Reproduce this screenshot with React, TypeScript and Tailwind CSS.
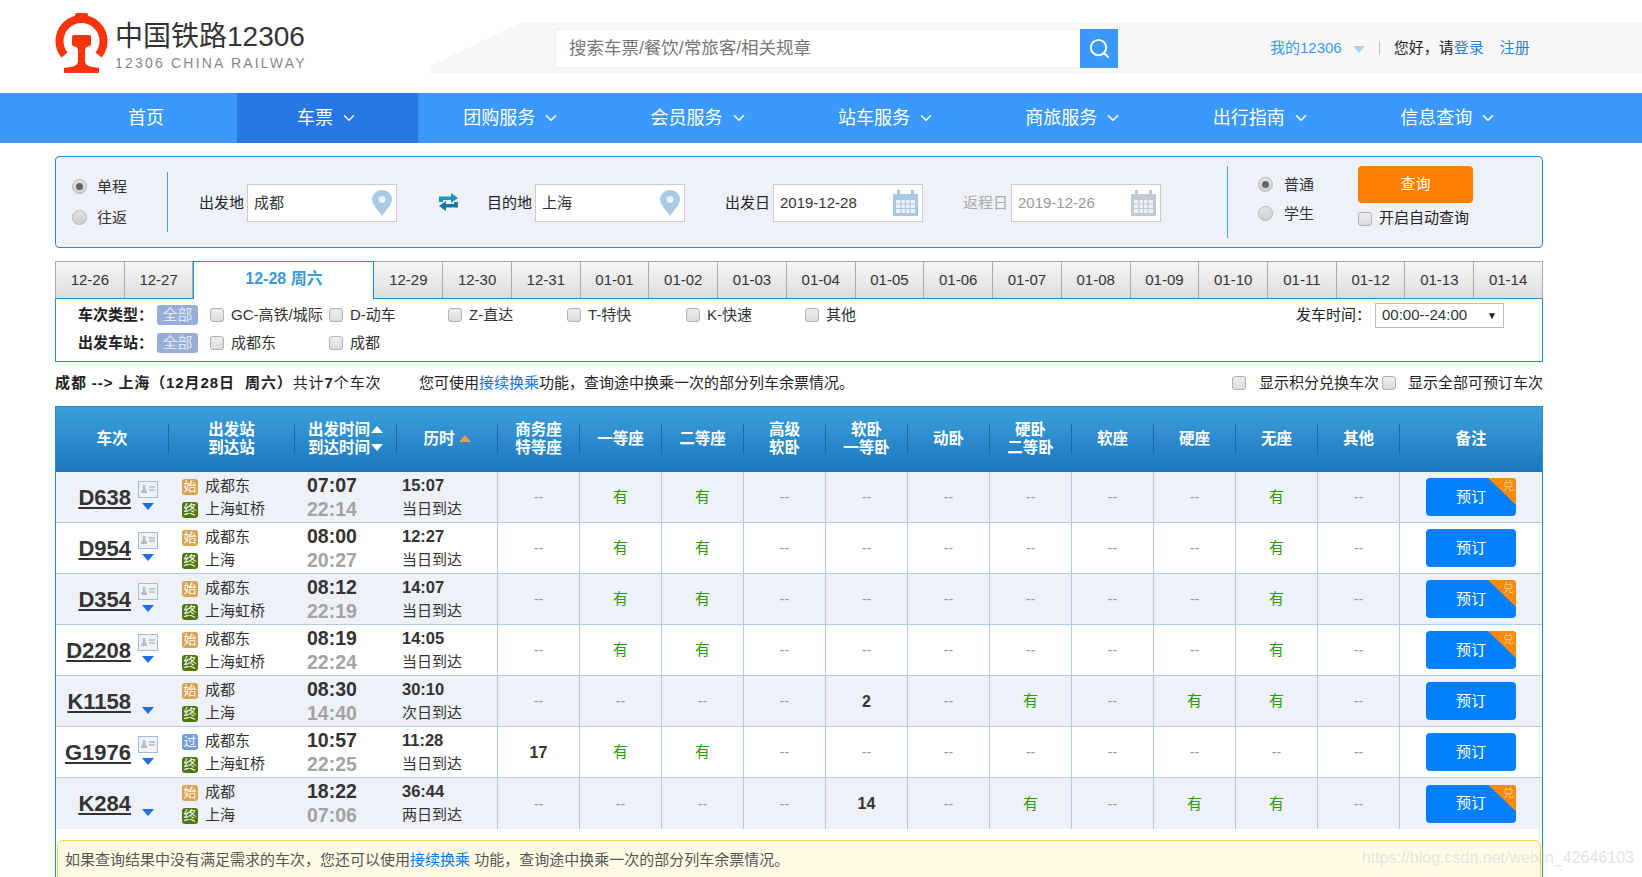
import { ChevronDown, Search } from 'lucide-react';

const navItems = ['团购服务', '会员服务', '站车服务', '商旅服务', '出行指南', '信息查询'];
const dates = ['12-29', '12-30', '12-31', '01-01', '01-02', '01-03', '01-04', '01-05', '01-06', '01-07', '01-08', '01-09', '01-10', '01-11', '01-12', '01-13', '01-14'];
const seatHeads = [['商务座', '特等座'], ['一等座'], ['二等座'], ['高级', '软卧'], ['软卧', '一等卧'], ['动卧'], ['硬卧', '二等卧'], ['软座'], ['硬座'], ['无座'], ['其他']];
const typeFilters = ['GC-高铁/城际', 'D-动车', 'Z-直达', 'T-特快', 'K-快速', '其他'];

const Y = '有';
const N = '--';
const trains = [
  { no: 'D638', id: true, mark: '始', from: '成都东', to: '上海虹桥', dep: '07:07', arr: '22:14', dur: '15:07', day: '当日到达', seats: [N, Y, Y, N, N, N, N, N, N, Y, N], ex: true },
  { no: 'D954', id: true, mark: '始', from: '成都东', to: '上海', dep: '08:00', arr: '20:27', dur: '12:27', day: '当日到达', seats: [N, Y, Y, N, N, N, N, N, N, Y, N], ex: false },
  { no: 'D354', id: true, mark: '始', from: '成都东', to: '上海虹桥', dep: '08:12', arr: '22:19', dur: '14:07', day: '当日到达', seats: [N, Y, Y, N, N, N, N, N, N, Y, N], ex: true },
  { no: 'D2208', id: true, mark: '始', from: '成都东', to: '上海虹桥', dep: '08:19', arr: '22:24', dur: '14:05', day: '当日到达', seats: [N, Y, Y, N, N, N, N, N, N, Y, N], ex: true },
  { no: 'K1158', id: false, mark: '始', from: '成都', to: '上海', dep: '08:30', arr: '14:40', dur: '30:10', day: '次日到达', seats: [N, N, N, N, '2', N, Y, N, Y, Y, N], ex: false },
  { no: 'G1976', id: true, mark: '过', from: '成都东', to: '上海虹桥', dep: '10:57', arr: '22:25', dur: '11:28', day: '当日到达', seats: ['17', Y, Y, N, N, N, N, N, N, N, N], ex: false },
  { no: 'K284', id: false, mark: '始', from: '成都', to: '上海', dep: '18:22', arr: '07:06', dur: '36:44', day: '两日到达', seats: [N, N, N, N, '14', N, Y, N, Y, Y, N], ex: true },
];

function Logo() {
  return (
    <svg width="53" height="60" viewBox="0 0 53 60" className="shrink-0">
      <path d="M9.5 42 A22 22 0 1 1 43.5 42" fill="none" stroke="#f9330c" strokeWidth="8" />
      <path d="M20 6 V2 Q20 0 22 0 H31 Q33 0 33 2 V6 Z" fill="#f9330c" />
      <path d="M17 24 Q17 22 19 22 H34 Q36 22 36 24 V31 Q36 33 33 33.5 Q30 34 30 38 V48 Q30 52 35 53.5 L44 55 V60 H9 V55 L18 53.5 Q23 52 23 48 V38 Q23 34 20 33.5 Q17 33 17 31 Z" fill="#f9330c" />
    </svg>
  );
}

function Radio({ on }: { on?: boolean }) {
  return (
    <span className="flex h-[15px] w-[15px] items-center justify-center rounded-full border border-[#b5b5b5] bg-gradient-to-b from-[#e4e4e4] to-[#cfcfcf]">
      {on && <span className="h-[7px] w-[7px] rounded-full bg-[#666]" />}
    </span>
  );
}

function Check() {
  return <span className="block h-[14px] w-[14px] shrink-0 rounded-[3px] border border-[#b0b0b0] bg-gradient-to-b from-[#eeeeee] to-[#dcdcdc]" />;
}

function Pin() {
  return (
    <svg width="20" height="26" viewBox="0 0 20 26">
      <path d="M10 26 C6 20 0 15 0 9.5 A10 9.5 0 0 1 20 9.5 C20 15 14 20 10 26 Z" fill="#a7cbe6" />
      <circle cx="10" cy="9.5" r="3.5" fill="#eef1f8" />
    </svg>
  );
}

function Calendar({ off }: { off?: boolean }) {
  const c = off ? '#c3c8d5' : '#a9c8e3';
  return (
    <svg width="25" height="26" viewBox="0 0 25 26">
      <path d="M0 4 H4 V0 H7 V4 H18 V0 H21 V4 H25 V26 H0 Z" fill={c} />
      <rect x="3" y="10" width="19" height="13" fill="#eef1f8" />
      <path d="M3 14 H22 M3 18.5 H22 M8 10 V23 M12.5 10 V23 M17 10 V23" stroke={c} strokeWidth="1.2" />
    </svg>
  );
}

function Swap() {
  return (
    <svg width="21" height="18" viewBox="0 0 21 18">
      <path d="M1 9 V3.5 H13 V0 L20 5 L13 10 V7 H5 V9 Z" fill="#1b95c4" />
      <path d="M20 9 V14.5 H8 V18 L1 13 L8 8 V11 H16 V9 Z" fill="#14789f" />
    </svg>
  );
}

function Triangle({ up, className }: { up?: boolean; className: string }) {
  return (
    <svg width="12" height="7" viewBox="0 0 12 7" className={className}>
      <polygon points={up ? '6,0 12,7 0,7' : '0,0 12,0 6,7'} fill="currentColor" />
    </svg>
  );
}

function IdCard() {
  return (
    <svg width="20" height="17" viewBox="0 0 20 17" className="block">
      <rect x="0.5" y="0.5" width="19" height="16" fill="#eef3fa" stroke="#9fbcdf" />
      <path d="M3 12 H9 V10 L7.3 8.5 V4 H4.8 V8.5 L3 10 Z" fill="#b9b9c0" />
      <path d="M11 6 H17 M11 9 H17" stroke="#b9b9c0" strokeWidth="1.4" />
    </svg>
  );
}

function Field({ label, value, off, children }: { label: string; value: string; off?: boolean; children: React.ReactNode }) {
  return (
    <div className="mt-[2px] flex items-center">
      <span className={`w-[46px] text-[15px] ${off ? 'text-[#aaa]' : 'text-[#222]'}`}>{label}</span>
      <div className="ml-[2px] flex h-[38px] w-[150px] items-center justify-between border border-[#ccc] bg-white pl-[6px] pr-[4px]">
        <span className={`text-[15px] ${off ? 'text-[#999]' : 'text-[#333]'}`}>{value}</span>
        {children}
      </div>
    </div>
  );
}

function Station({ mark, name }: { mark: string; name: string }) {
  const bg = mark === '始' ? 'bg-[#d9a24f]' : mark === '终' ? 'bg-[#4f7710]' : 'bg-[#6f9ce2]';
  return (
    <div className="flex h-[23px] items-center gap-[7px]">
      <span className={`flex h-[16px] w-[16px] items-center justify-center rounded-[3px] text-[13px] leading-none text-white ${bg}`}>{mark}</span>
      <span className="text-[15px] text-[#333]">{name}</span>
    </div>
  );
}

function Seat({ v }: { v: string }) {
  if (v === Y) return <span className="text-[15px] text-[#2a9d00]">{v}</span>;
  if (v === N) return <span className="text-[14px] text-[#999]">{v}</span>;
  return <span className="text-[16px] font-bold text-[#333]">{v}</span>;
}

export default function App() {
  return (
    <div className="relative h-[877px] w-[1642px] overflow-hidden bg-white font-['Liberation_Sans','Noto_Sans_CJK_SC',sans-serif] text-[#333]">
      {/* top */}
      <header className="flex h-[93px]">
        <div className="ml-[55px] flex w-[375px] shrink-0 pt-[13px]">
          <Logo />
          <div className="ml-[7px] pt-[8px]">
            <div className="text-[28px] leading-[32px] text-[#333]">中国铁路12306</div>
            <div className="mt-[1px] text-[14px] leading-[18px] tracking-[2.2px] text-[#888]">12306 CHINA RAILWAY</div>
          </div>
        </div>
        <div className="mt-[23px] flex h-[50px] flex-1 items-center bg-[#f7f7f7] [clip-path:polygon(0_100%,0_86%,90px_0,100%_0,100%_100%)]">
          <div className="ml-[125px] flex h-[39px] w-[563px] border border-[#eeeeee] bg-white">
            <span className="flex-1 pl-[13px] text-[17.5px] leading-[36px] text-[#777]">搜索车票/餐饮/常旅客/相关规章</span>
            <span className="-my-px -mr-px flex w-[38px] items-center justify-center bg-[#3b99fc]">
              <Search size={23} color="#fff" strokeWidth={2} />
            </span>
          </div>
          <span className="ml-[152px] text-[15px] text-[#3b99fc]">我的12306</span>
          <Triangle className="ml-[11px] mt-[2px] text-[#a9d1fd]" />
          <span className="ml-[14px] h-[14px] w-px bg-[#a9c9ea]" />
          <span className="ml-[14px] text-[15px] text-[#222]">您好，请<span className="text-[#2c82e0]">登录</span></span>
          <span className="ml-[16px] text-[15px] text-[#2c82e0]">注册</span>
        </div>
      </header>

      {/* nav */}
      <nav className="flex h-[50px] bg-[#3b99fc] pl-[55px] text-[18px] text-white">
        <div className="flex w-[182px] items-center justify-center">首页</div>
        <div className="flex w-[181px] items-center justify-center gap-[7px] bg-[#2676e3]">
          车票 <ChevronDown size={18} strokeWidth={2} />
        </div>
        {navItems.map(n => (
          <div key={n} className="flex w-[187.4px] items-center justify-center gap-[7px]">
            {n} <ChevronDown size={18} strokeWidth={2} />
          </div>
        ))}
      </nav>

      <main className="ml-[55px] w-[1488px] pt-[13px]">
        {/* search form */}
        <section className="flex h-[92px] items-center rounded-[4px] border border-[#2b8ccb] bg-[#eef1f8]">
          <div className="flex h-[60px] w-[112px] shrink-0 flex-col justify-center gap-[14px] border-r border-[#4a9fd4] pl-[16px] text-[15px] leading-[17px]">
            <label className="flex items-center gap-[10px]"><Radio on />单程</label>
            <label className="flex items-center gap-[10px]"><Radio />往返</label>
          </div>
          <div className="ml-[31px]"><Field label="出发地" value="成都"><Pin /></Field></div>
          <div className="ml-[41px]"><Swap /></div>
          <div className="ml-[28px]"><Field label="目的地" value="上海"><Pin /></Field></div>
          <div className="ml-[40px]"><Field label="出发日" value="2019-12-28"><Calendar /></Field></div>
          <div className="ml-[40px]"><Field label="返程日" value="2019-12-26" off><Calendar off /></Field></div>
          <div className="ml-[66px] flex h-[72px] w-[31px] flex-col border-l border-[#4a9fd4]" />
          <div className="mb-[6px] flex w-[100px] flex-col gap-[12px] text-[15px] leading-[17px]">
            <label className="flex items-center gap-[11px]"><Radio on />普通</label>
            <label className="flex items-center gap-[11px]"><Radio />学生</label>
          </div>
          <div className="mb-[10px] flex flex-col">
            <button className="h-[37px] w-[115px] rounded-[4px] bg-[#ff8000] text-[15px] text-white">查询</button>
            <label className="mt-[6px] flex h-[20px] items-center gap-[7px] text-[15px] text-[#222]"><Check />开启自动查询</label>
          </div>
        </section>

        {/* date tabs */}
        <div className="mt-[13px] flex h-[37px] items-start">
          {['12-26', '12-27'].map(d => (
            <div key={d} className="flex h-[37px] flex-1 items-center justify-center border-r border-t border-[#aaa] bg-gradient-to-b from-[#f6f6f6] to-[#dedede] text-[15px] first:border-l">{d}</div>
          ))}
          <div className="relative z-10 flex h-[38px] w-[181px] items-center justify-center border-x border-t border-[#2b8ccb] bg-white pb-[4px] text-[16px] font-bold text-[#3b99d9]">12-28 周六</div>
          {dates.map(d => (
            <div key={d} className="flex h-[37px] flex-1 items-center justify-center border-r border-t border-[#aaa] bg-gradient-to-b from-[#f6f6f6] to-[#dedede] text-[15px]">{d}</div>
          ))}
        </div>

        {/* filters */}
        <section className="flex h-[64px] flex-col border border-[#2b8ccb] pl-[22px] pt-[2px] text-[15px]">
          <div className="flex h-[28px] items-center">
            <b className="w-[79px] text-[15px] text-[#222]">车次类型：</b>
            <span className="flex h-[20px] w-[41px] items-center justify-center rounded-[3px] bg-[#97aedb] text-[15px] text-[#e4e9f5]">全部</span>
            <div className="ml-[12px] flex">
              {typeFilters.map(t => (
                <label key={t} className="flex w-[119px] items-center gap-[7px] whitespace-nowrap"><Check />{t}</label>
              ))}
            </div>
            <span className="ml-auto w-[79px] text-[#222]">发车时间：</span>
            <div className="mr-[38px] flex h-[25px] w-[129px] items-center justify-between border border-[#bbb] px-[6px]">
              00:00--24:00
              <span className="text-[10px] text-[#222]">▼</span>
            </div>
          </div>
          <div className="flex h-[28px] items-center">
            <b className="w-[79px] text-[15px] text-[#222]">出发车站：</b>
            <span className="flex h-[20px] w-[41px] items-center justify-center rounded-[3px] bg-[#97aedb] text-[15px] text-[#e4e9f5]">全部</span>
            <div className="ml-[12px] flex">
              <label className="flex w-[119px] items-center gap-[7px]"><Check />成都东</label>
              <label className="flex w-[119px] items-center gap-[7px]"><Check />成都</label>
            </div>
          </div>
        </section>

        {/* summary */}
        <div className="flex h-[44px] items-center pb-[2px] text-[15px] text-[#222]">
          <span className="w-[364px] tracking-[0.9px]"><b>成都 --&gt; 上海（12月28日&nbsp; 周六）</b>共计<b>7</b>个车次</span>
          <span>您可使用<span className="text-[#0077ff]">接续换乘</span>功能，查询途中换乘一次的部分列车余票情况。</span>
          <span className="ml-auto flex items-center"><Check /><span className="ml-[13px]">显示积分兑换车次</span></span>
          <span className="ml-[3px] flex items-center"><Check /><span className="ml-[12px]">显示全部可预订车次</span></span>
        </div>

        {/* result table */}
        <section className="h-[480px] border-x border-[#2b8ccb]">
          <div className="grid h-[66px] grid-cols-[112px_126px_102px_101px_repeat(11,82px)_143px] items-center border-t border-[#2b8ccb] bg-gradient-to-b from-[#3c9fdb] to-[#1a78bf] pb-[2px] text-center text-[15.5px] font-bold leading-[18px] text-white">
            <div className="flex h-[30px] items-center justify-center">车次</div>
            <div className="flex h-[30px] flex-col justify-center border-l border-[#2a62a5]"><span>出发站</span><span>到达站</span></div>
            <div className="flex h-[30px] flex-col justify-center border-l border-[#2a62a5]">
              <span className="flex items-center justify-center gap-[1px]">出发时间<Triangle up className="text-white" /></span>
              <span className="flex items-center justify-center gap-[1px]">到达时间<Triangle className="text-white" /></span>
            </div>
            <div className="flex h-[30px] items-center justify-center gap-[4px] border-l border-[#2a62a5]">历时<Triangle up className="text-[#f59a3c]" /></div>
            {seatHeads.map(h => (
              <div key={h[0] + h.length} className="flex h-[30px] flex-col justify-center border-l border-[#2a62a5]">
                {h.map(l => <span key={l}>{l}</span>)}
              </div>
            ))}
            <div className="flex h-[30px] items-center justify-center border-l border-[#2a62a5]">备注</div>
          </div>

          {trains.map((t, i) => (
            <div key={t.no} className={`grid h-[51px] grid-cols-[112px_126px_102px_101px_repeat(11,82px)_143px] border-[#aecde0] ${i % 2 === 0 ? 'bg-[#eef1f8]' : 'bg-white'} ${i < 6 ? 'border-b' : ''}`}>
              <div className="flex items-center">
                <a className="w-[75px] text-right text-[22px] font-bold text-[#333] underline underline-offset-2">{t.no}</a>
                <div className="ml-[7px] flex h-full w-[20px] flex-col items-center pt-[9px]">
                  <div className="h-[17px]">{t.id && <IdCard />}</div>
                  <Triangle className="mt-[5px] text-[#1c6fe0]" />
                </div>
              </div>
              <div className="pl-[14px] pt-[3px]">
                <Station mark={t.mark} name={t.from} />
                <Station mark="终" name={t.to} />
              </div>
              <div className="pl-[13px] pt-[1px] text-[19.5px] font-bold leading-[24px]">
                <div className="text-[#333]">{t.dep}</div>
                <div className="text-[#a3a3a3]">{t.arr}</div>
              </div>
              <div className="pl-[6px] pt-[1px] leading-[24px]">
                <div className="text-[16.5px] font-bold text-[#333]">{t.dur}</div>
                <div className="text-[15px] text-[#333]">{t.day}</div>
              </div>
              {t.seats.map((s, j) => (
                <div key={j} className="flex items-center justify-center border-l border-[#aecde0] pt-[1px]"><Seat v={s} /></div>
              ))}
              <div className="flex items-center justify-center border-l border-[#aecde0]">
                <button className="relative h-[38px] w-[90px] overflow-hidden rounded-[4px] bg-[#0080ff] text-[15px] text-white">
                  预订
                  {t.ex && (
                    <>
                      <span className="absolute right-0 top-0 h-[27px] w-[28px] bg-[#ff8a0a] [clip-path:polygon(0_0,100%_0,100%_100%)]" />
                      <span className="absolute right-[2px] top-[1px] text-[11px] leading-[14px] text-[#ffc88a]">兑</span>
                    </>
                  )}
                </button>
              </div>
            </div>
          ))}

          <div className="mx-[1px] mt-[11px] h-[60px] rounded-[6px] border border-[#f8d23a] bg-[#fffbe5] pl-[7px] pt-[8px] text-[15px] text-[#555]">
            如果查询结果中没有满足需求的车次，您还可以使用<span className="text-[#0077ff]">接续换乘</span> 功能，查询途中换乘一次的部分列车余票情况。
          </div>
        </section>
      </main>

      <div className="absolute bottom-[7px] right-[8px] text-[16px] leading-[24px] text-[#d8d8d8]/70">https://blog.csdn.net/weixin_42646103</div>
    </div>
  );
}
